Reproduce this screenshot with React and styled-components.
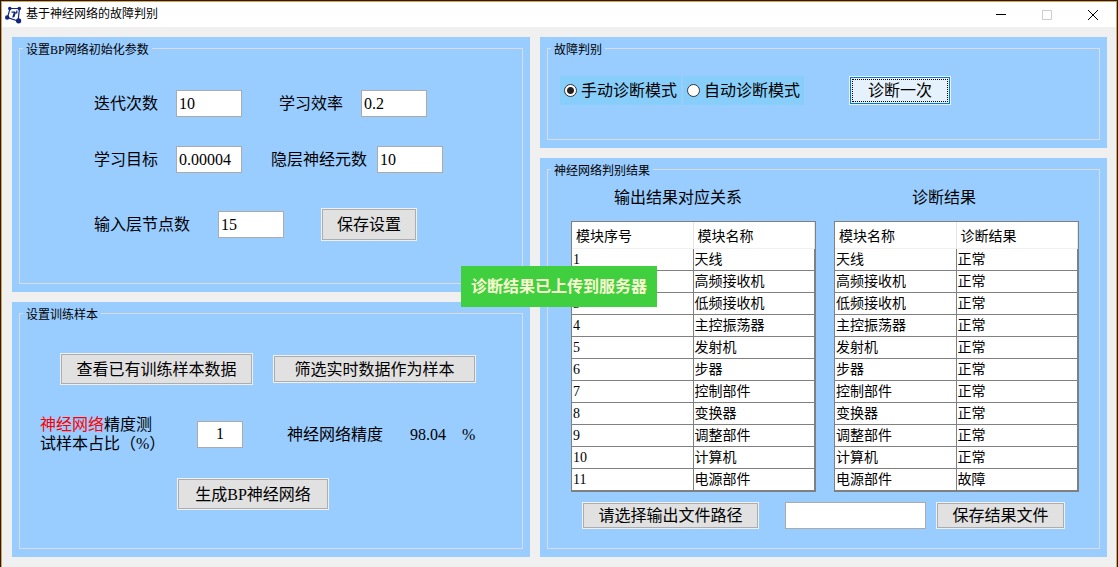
import React, { useState } from 'react';
import styled, { createGlobalStyle, css } from 'styled-components';

const colors = {
  panel: '#99ccff',
  frame: '#dcdcdc',
  face: '#f0f0f0',
  button: '#e1e1e1',
  buttonLine: '#adadad',
  inputLine: '#ababab',
  grid: '#808080',
  radio: '#87cefa',
  focus: '#0078d7',
  toast: '#3fcf3f',
  navy: '#14257f',
};

const modules = [
  '天线',
  '高频接收机',
  '低频接收机',
  '主控振荡器',
  '发射机',
  '步器',
  '控制部件',
  '变换器',
  '调整部件',
  '计算机',
  '电源部件',
];
const faults = ['电源部件'];

export default function App() {
  const [mode, setMode] = useState('manual');
  return (
    <>
      <GlobalStyle />
      <Window>
        <TitleBar>
          <Logo />
          <WindowTitle>基于神经网络的故障判别</WindowTitle>
          <WindowButton aria-label="最小化">
            <svg width="12" height="12" viewBox="0 0 12 12">
              <path d="M1 5.5h10" />
            </svg>
          </WindowButton>
          <WindowButton aria-label="最大化" disabled>
            <svg width="12" height="12" viewBox="0 0 12 12">
              <path d="M1.5 1.5h9v9h-9z" />
            </svg>
          </WindowButton>
          <WindowButton aria-label="关闭">
            <svg width="12" height="12" viewBox="0 0 12 12">
              <path d="M1 1l10 10M11 1L1 11" />
            </svg>
          </WindowButton>
        </TitleBar>
        <Content>
          <Column>
            <Panel grow>
              <Frame>
                <Legend>设置BP网络初始化参数</Legend>
                <Params>
                  <ParamRows>
                    <Row gap={37}>
                      <Field id="epochs" label="迭代次数" value="10" gap={18} />
                      <Field id="rate" label="学习效率" value="0.2" gap={18} />
                    </Row>
                    <Row gap={29}>
                      <Field id="goal" label="学习目标" value="0.00004" gap={18} />
                      <Field id="hidden" label="隐层神经元数" value="10" gap={10} />
                    </Row>
                  </ParamRows>
                  <Row gap={37}>
                    <Field id="inputs" label="输入层节点数" value="15" gap={28} />
                    <Button $w={96} $h={33}>
                      保存设置
                    </Button>
                  </Row>
                </Params>
              </Frame>
            </Panel>
            <Panel grow>
              <Frame>
                <Legend>设置训练样本</Legend>
                <Samples>
                  <SampleButtons>
                    <Button $w={193} $h={32}>
                      查看已有训练样本数据
                    </Button>
                    <Button $w={203} $h={28}>
                      筛选实时数据作为样本
                    </Button>
                  </SampleButtons>
                  <Accuracy>
                    <RatioLabel htmlFor="ratio">
                      <Red>神经网络</Red>精度测试样本占比（%）
                    </RatioLabel>
                    <Input id="ratio" defaultValue="1" $w={46} $center />
                    <AccuracyLabel htmlFor="accuracy">神经网络精度</AccuracyLabel>
                    <AccuracyValue id="accuracy">
                      <span>98.04</span>
                      <span>%</span>
                    </AccuracyValue>
                  </Accuracy>
                  <Generate>
                    <Button $w={152} $h={32}>
                      生成BP神经网络
                    </Button>
                  </Generate>
                </Samples>
              </Frame>
            </Panel>
          </Column>
          <Column wide>
            <Panel>
              <Frame>
                <Legend>故障判别</Legend>
                <Diagnose>
                  <Modes>
                    <Mode>
                      <Radio
                        name="mode"
                        checked={mode === 'manual'}
                        onChange={() => setMode('manual')}
                      />
                      手动诊断模式
                    </Mode>
                    <Mode>
                      <Radio
                        name="mode"
                        checked={mode === 'auto'}
                        onChange={() => setMode('auto')}
                      />
                      自动诊断模式
                    </Mode>
                  </Modes>
                  <Button $w={102} $h={29} $active>
                    诊断一次
                  </Button>
                </Diagnose>
              </Frame>
            </Panel>
            <Panel grow>
              <Frame>
                <Legend>神经网络判别结果</Legend>
                <Tables>
                  <ResultTable
                    title="输出结果对应关系"
                    indent={43}
                    head={['模块序号', '模块名称']}
                    rows={modules.map((name, i) => [i + 1, name])}
                  />
                  <ResultTable
                    title="诊断结果"
                    indent={78}
                    head={['模块名称', '诊断结果']}
                    rows={modules.map((name) => [name, faults.includes(name) ? '故障' : '正常'])}
                  />
                </Tables>
                <Output>
                  <Button $w={177} $h={27}>
                    请选择输出文件路径
                  </Button>
                  <PathInput aria-label="输出文件路径" $w={141} />
                  <Button $w={129} $h={27}>
                    保存结果文件
                  </Button>
                </Output>
              </Frame>
            </Panel>
          </Column>
        </Content>
        <Toast role="status">诊断结果已上传到服务器</Toast>
      </Window>
    </>
  );
}

function Panel({ grow, children }) {
  return <PanelBox $grow={grow}>{children}</PanelBox>;
}

function Column({ wide, children }) {
  return <ColumnBox $wide={wide}>{children}</ColumnBox>;
}

function Row({ gap, children }) {
  return <RowBox $gap={gap}>{children}</RowBox>;
}

function Field({ id, label, value, gap }) {
  return (
    <RowBox $gap={gap}>
      <label htmlFor={id}>{label}</label>
      <Input id={id} defaultValue={value} $w={66} />
    </RowBox>
  );
}

function ResultTable({ title, indent, head, rows }) {
  return (
    <Table>
      <Caption $indent={indent}>{title}</Caption>
      <thead>
        <tr>
          {head.map((text) => (
            <Th key={text} scope="col">
              {text}
            </Th>
          ))}
        </tr>
      </thead>
      <tbody>
        {rows.map((row) => (
          <tr key={row[0]}>
            {row.map((text) => (
              <Td key={text}>{text}</Td>
            ))}
          </tr>
        ))}
      </tbody>
    </Table>
  );
}

function Logo() {
  return (
    <svg width="18" height="18" viewBox="0 0 18 18" fill="none" stroke={colors.navy}>
      <path d="M5 2.5L14.5 2.5L13 15L2.5 11.5Z" strokeWidth="1.2" />
      <path d="M6.5 6.2h3L7.8 11.5M11.8 4.5v2.3h-1.6L8.8 11" strokeWidth="1.2" />
      <g fill={colors.navy} stroke="none">
        <circle cx="4.8" cy="2.6" r="1.8" />
        <circle cx="14.3" cy="2.6" r="1.8" />
        <circle cx="2.2" cy="11.5" r="2.2" />
        <circle cx="13.6" cy="14.8" r="2.6" />
      </g>
    </svg>
  );
}

const GlobalStyle = createGlobalStyle`
  * {
    box-sizing: border-box;
  }
  body {
    margin: 0;
    color: #000;
    background-color: #1c1c22;
    font-family: 'Liberation Serif', 'Noto Sans CJK SC', sans-serif;
    font-size: 16px;
    font-weight: 400;
    line-height: 19px;
    white-space: nowrap;
  }
  button,
  input {
    font: inherit;
    color: inherit;
  }
`;

const Window = styled.div`
  display: flex;
  flex-direction: column;
  min-height: calc(100vh - 1px);
  margin: 1px 1px 0;
  border: 1px solid #e3a32b;
  border-bottom: none;
  background-color: ${colors.face};
`;

const TitleBar = styled.header`
  display: flex;
  align-items: center;
  height: 25px;
  padding-left: 3px;
  background-color: #fff;
`;

const WindowTitle = styled.h1`
  flex: 1;
  margin: 0 0 0 3px;
  font-size: 12px;
  font-weight: 400;
`;

const WindowButton = styled.button`
  display: flex;
  align-items: center;
  justify-content: center;
  width: 46px;
  height: 25px;
  padding: 0;
  border: none;
  background: none;
  svg {
    fill: none;
    stroke: ${(props) => (props.disabled ? '#cccccc' : '#000')};
  }
`;

const Content = styled.main`
  flex: 1;
  display: flex;
  gap: 10px;
  padding: 10px;
  padding-right: 9px;
`;

const ColumnBox = styled.div`
  flex: ${(props) => (props.$wide ? 567 : 518)} 1 0;
  display: flex;
  flex-direction: column;
  gap: 10px;
`;

const PanelBox = styled.section`
  flex: ${(props) => (props.$grow ? '1 1 0' : 'none')};
  display: flex;
  padding: 3px 7px 8px;
  background-color: ${colors.panel};
`;

const Frame = styled.fieldset`
  flex: 1;
  min-width: 0;
  margin: 0;
  padding: 0;
  border: 1px solid ${colors.frame};
`;

const Legend = styled.legend`
  margin-left: 3px;
  padding: 4px 3px 0;
  font-size: 12px;
  line-height: 13px;
`;

const Params = styled.div`
  display: flex;
  flex-direction: column;
  gap: 35px;
  padding: 33px 0 0 74px;
`;

const ParamRows = styled.div`
  display: flex;
  flex-direction: column;
  gap: 29px;
`;

const RowBox = styled.div`
  display: flex;
  align-items: center;
  gap: ${(props) => props.$gap}px;
`;

const Input = styled.input`
  width: ${(props) => props.$w}px;
  height: 27px;
  padding: 0 2px;
  border: 1px solid ${colors.inputLine};
  background-color: #fff;
  text-align: ${(props) => (props.$center ? 'center' : 'left')};
  outline: none;
`;

const PathInput = styled(Input)`
  margin: 0 10px 0 26px;
`;

const Button = styled.button`
  width: ${(props) => props.$w}px;
  height: ${(props) => props.$h}px;
  padding: 0;
  border: 1px solid ${colors.face};
  background-color: ${colors.button};
  box-shadow: inset 0 0 0 1px ${colors.buttonLine};
  ${(props) =>
    props.$active &&
    css`
      background-color: #e5f1fb;
      box-shadow: inset 0 0 0 1px ${colors.focus};
      outline: 1px dotted #000;
      outline-offset: -4px;
    `}
`;

const Samples = styled.div`
  padding: 31px 0 0 20px;
`;

const SampleButtons = styled.div`
  display: flex;
  align-items: center;
  gap: 20px;
  padding-left: 20px;
`;

const Accuracy = styled.div`
  display: flex;
  align-items: center;
  margin: 30px 0 25px;
`;

const RatioLabel = styled.label`
  width: 127px;
  margin-right: 30px;
  white-space: normal;
`;

const Red = styled.span`
  color: #ff0000;
`;

const AccuracyLabel = styled.label`
  margin: 0 27px 0 44px;
`;

const AccuracyValue = styled.output`
  display: flex;
  gap: 16px;
`;

const Generate = styled.div`
  padding-left: 137px;
`;

const Diagnose = styled.div`
  display: flex;
  gap: 45px;
  padding: 19px 12px 34px;
`;

const Modes = styled.div`
  display: flex;
  gap: 2px;
`;

const Mode = styled.label`
  display: flex;
  align-items: center;
  gap: 4px;
  width: 121px;
  height: 29px;
  padding-left: 4px;
  background-color: ${colors.radio};
`;

const Radio = styled.input.attrs({ type: 'radio' })`
  appearance: none;
  width: 13px;
  height: 13px;
  margin: 0;
  border: 1px solid #333;
  border-radius: 50%;
  background-color: #fff;
  &:checked {
    background-image: radial-gradient(circle, #222 3px, transparent 4px);
  }
`;

const Tables = styled.div`
  display: flex;
  gap: 18px;
  padding: 10px 20px 0 23px;
`;

const Table = styled.table`
  flex: 1;
  table-layout: fixed;
  width: 100%;
  border: 1px solid ${colors.grid};
  border-spacing: 0;
  background-color: #fff;
  font-size: 14px;
`;

const Caption = styled.caption`
  padding: 0 0 14px ${(props) => props.$indent}px;
  font-size: 16px;
  text-align: left;
`;

const Th = styled.th`
  height: 27px;
  padding: 2px 4px 0;
  border-right: 1px solid #e5e5e5;
  border-bottom: 1px solid #f0f0f0;
  font-weight: inherit;
  text-align: left;
`;

const Td = styled.td`
  height: 22px;
  padding: 0 1px;
  border-right: 1px solid ${colors.grid};
  border-bottom: 1px solid ${colors.grid};
`;

const Output = styled.div`
  display: flex;
  padding: 10px 0 0 34px;
`;

const Toast = styled.div`
  position: fixed;
  inset: 266px 0 auto;
  width: fit-content;
  margin: 0 auto;
  padding: 11px 10px;
  background-color: ${colors.toast};
  color: #f8f8cf;
  font-weight: 700;
`;
